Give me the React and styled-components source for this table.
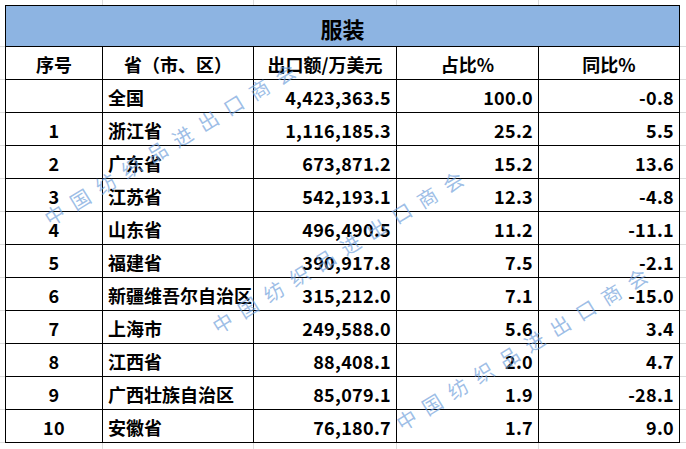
import React from "react";
import styled, { createGlobalStyle } from "styled-components";

const Global = createGlobalStyle`
  html, body { margin: 0; padding: 0; background: #fff; }
  body { font-family: "Noto Sans CJK SC", "Noto Sans", sans-serif; }
`;

const GRID = "#dcdcdc";

const Sheet = styled.div`
  position: relative;
  box-sizing: border-box;
  width: 686px;
  height: 449px;
  overflow: hidden;
  padding: 5px 0 0 5px;
  background-image:
    linear-gradient(to right,
      transparent 102px, ${GRID} 102px 103px,
      transparent 103px 253px, ${GRID} 253px 254px,
      transparent 254px 396px, ${GRID} 396px 397px,
      transparent 397px 538px, ${GRID} 538px 539px,
      transparent 539px),
    linear-gradient(#fff, #fff),
    repeating-linear-gradient(to bottom, ${GRID} 0 1px, transparent 1px 33px);
  background-size: 100% 100%, 100% 46px, 100% 100%;
  background-position: 0 0, 0 0, 0 13px;
  background-repeat: no-repeat, no-repeat, repeat;
`;

const Table = styled.div`
  display: grid;
  grid-template-columns: 96px 150px 142px 141px 140px;
  grid-template-rows: 40px;
  grid-auto-rows: 32px;
  gap: 1px;
  width: max-content;
  background: #000;
  border: 1px solid #000;
`;

const Title = styled.div`
  grid-column: 1 / -1;
  background: #8db4e2;
  display: flex;
  align-items: center;
  justify-content: center;
  padding-top: 3px;
  box-sizing: border-box;
  font-size: 22px;
  font-weight: 700;
  color: #000;
`;

const Cell = styled.div`
  background: #fff;
  display: flex;
  align-items: center;
  justify-content: ${(p) =>
    p.$align === "left" ? "flex-start" : p.$align === "right" ? "flex-end" : "center"};
  padding: 1px 5px 0 5px;
  box-sizing: border-box;
  font-size: 18px;
  font-weight: 700;
  color: #000;
  white-space: nowrap;
  letter-spacing: ${(p) => (p.$num ? "0.3px" : "0")};
`;

const Watermark = styled.div`
  position: absolute;
  left: ${(p) => p.$x}px;
  top: ${(p) => p.$y}px;
  height: 20px;
  line-height: 20px;
  transform-origin: left center;
  transform: rotate(-31.5deg);
  font-family: "Noto Sans CJK SC", sans-serif;
  font-weight: 400;
  font-size: 20px;
  letter-spacing: 10px;
  color: rgba(110, 158, 218, 0.68);
  white-space: nowrap;
  pointer-events: none;
`;

const headers = ["序号", "省（市、区）", "出口额/万美元", "占比%", "同比%"];

const rows = [
  ["", "全国", "4,423,363.5", "100.0", "-0.8"],
  ["1", "浙江省", "1,116,185.3", "25.2", "5.5"],
  ["2", "广东省", "673,871.2", "15.2", "13.6"],
  ["3", "江苏省", "542,193.1", "12.3", "-4.8"],
  ["4", "山东省", "496,490.5", "11.2", "-11.1"],
  ["5", "福建省", "390,917.8", "7.5", "-2.1"],
  ["6", "新疆维吾尔自治区", "315,212.0", "7.1", "-15.0"],
  ["7", "上海市", "249,588.0", "5.6", "3.4"],
  ["8", "江西省", "88,408.1", "2.0", "4.7"],
  ["9", "广西壮族自治区", "85,079.1", "1.9", "-28.1"],
  ["10", "安徽省", "76,180.7", "1.7", "9.0"],
];

const marks = [
  [46, 210],
  [214, 318],
  [398, 415],
];

export default function App() {
  return (
    <>
      <Global />
      <Sheet>
        <Table>
          <Title>服装</Title>
          {headers.map((h) => (
            <Cell key={h}>{h}</Cell>
          ))}
          {rows.map((r, i) => (
            <React.Fragment key={i}>
              <Cell $num>{r[0]}</Cell>
              <Cell $align="left">{r[1]}</Cell>
              <Cell $align="right" $num>{r[2]}</Cell>
              <Cell $align="right" $num>{r[3]}</Cell>
              <Cell $align="right" $num>{r[4]}</Cell>
            </React.Fragment>
          ))}
        </Table>
        {marks.map(([x, y], i) => (
          <Watermark key={i} $x={x} $y={y}>
            中国纺织品进出口商会
          </Watermark>
        ))}
      </Sheet>
    </>
  );
}
